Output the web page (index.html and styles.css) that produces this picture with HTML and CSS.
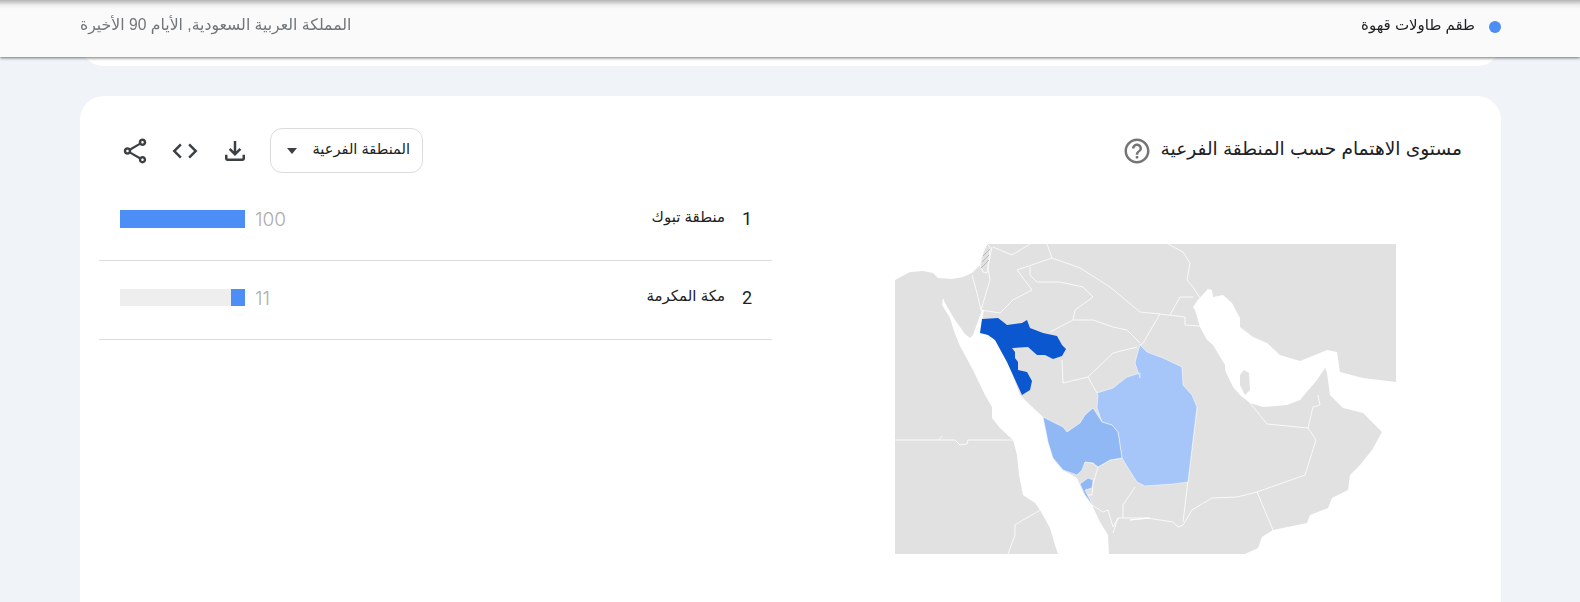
FILE: index.html
```html
<!DOCTYPE html>
<html lang="ar" dir="rtl">
<head>
  <meta charset="UTF-8">
  <title>مستوى الاهتمام حسب المنطقة الفرعية</title>
  <link rel="stylesheet" href="styles.css">
</head>
<body>
  <header class="topbar">
    <div class="term">
      <span class="term-dot"></span>
      <span class="term-name">طقم طاولات قهوة</span>
    </div>
    <div class="scope">المملكة العربية السعودية, الأيام 90 الأخيرة</div>
  </header>

  <div class="prev-card"></div>

  <section class="card">
    <div class="card-head">
      <div class="card-title">
        <h2>مستوى الاهتمام حسب المنطقة الفرعية</h2>
        <svg class="help" viewBox="0 0 24 24"><path d="M11 18h2v-2h-2v2zm1-16C6.48 2 2 6.48 2 12s4.48 10 10 10 10-4.48 10-10S17.52 2 12 2zm0 18c-4.41 0-8-3.59-8-8s3.59-8 8-8 8 3.59 8 8-3.59 8-8 8zm0-14c-2.21 0-4 1.79-4 4h2c0-1.1.9-2 2-2s2 .9 2 2c0 2-3 1.75-3 5h2c0-2.25 3-2.5 3-5 0-2.21-1.79-4-4-4z"/></svg>
      </div>
      <div class="actions">
        <div class="select">
          <span class="select-label">المنطقة الفرعية</span>
          <span class="caret"></span>
        </div>
        <svg class="icon" viewBox="0 0 24 24"><path d="M18 15v3H6v-3H4v3c0 1.1.9 2 2 2h12c1.1 0 2-.9 2-2v-3h-2zm-1-4-1.41-1.41L13 12.17V4h-2v8.17L8.41 9.59 7 11l5 5 5-5z"/></svg>
        <svg class="icon" viewBox="0 0 24 24"><path d="M9.4 16.6 4.8 12l4.6-4.6L8 6l-6 6 6 6 1.4-1.4zm5.2 0 4.6-4.6-4.6-4.6L16 6l6 6-6 6-1.4-1.4z"/></svg>
        <svg class="icon" viewBox="0 0 24 24"><path d="M18 16.08c-.76 0-1.44.3-1.96.77L8.91 12.7c.05-.23.09-.46.09-.7s-.04-.47-.09-.7l7.05-4.11c.54.5 1.25.81 2.04.81 1.66 0 3-1.34 3-3s-1.34-3-3-3-3 1.34-3 3c0 .24.04.47.09.7L8.04 9.81C7.5 9.31 6.79 9 6 9c-1.66 0-3 1.34-3 3s1.34 3 3 3c.79 0 1.5-.31 2.04-.81l7.12 4.16c-.05.21-.08.43-.08.65 0 1.61 1.31 2.92 2.92 2.92 1.61 0 2.92-1.31 2.92-2.92s-1.31-2.92-2.92-2.92zM18 4c.55 0 1 .45 1 1s-.45 1-1 1-1-.45-1-1 .45-1 1-1zM6 13c-.55 0-1-.45-1-1s.45-1 1-1 1 .45 1 1-.45 1-1 1zm12 7.02c-.55 0-1-.45-1-1s.45-1 1-1 1 .45 1 1-.45 1-1 1z"/></svg>
      </div>
    </div>

    <div class="card-body">
      <svg class="map" viewBox="0 0 501 310" dir="ltr">
        <rect class="land" width="501" height="310"/>
        <!-- mediterranean -->
        <path class="sea" d="M0 0V36L15 28 28 27 38 29 43 34 57 35 68 33 77 29 85 21 88 9 92 0Z"/>
        <!-- red sea and the two gulfs -->
        <path class="sea" d="M48 54 47 61 55 74 60 90 65 102 78 126 90 151 97 163 97 174 105 184 118 196 122 211 124 231 128 251 140 259 145 266 155 284 160 301 163 310H214L213 291 205 278 197 261 188 248 182 234 168 226 158 214 153 198 153 188 148 173 133 159 125 151 117 129 112 118 100 96 92 89 85 89 89 66 87 66 78 91 75 94 70 90 60 76 50 59Z"/>
        <!-- gulf and arabian sea -->
        <path class="sea" d="M298 63 303 56 313 45 317 46 318 53 328 51 337 59 345 74 345 83 358 93 372 99 385 111 405 117 415 113 432 106 442 108 445 128 468 134 501 138V310H350L363 304 367 293 378 286 412 279 415 271 433 264 437 254 453 246 455 231 465 221 477 206 487 188 468 169 448 164 435 151 432 129 430 124 422 136 405 156 392 161 368 163 355 159 345 151 338 143 330 126 330 121 318 101 312 96 305 83 300 66Z"/>
        <path class="land" d="M345 131 349 126 354 129 355 146 350 151 345 141Z"/>

        <g class="borders">
          <path d="M77 31 82 49 86 66M97 3 93 23 95 36 86 66"/>
          <path d="M98 3 117 11 135 0M152 0 157 14 122 26 137 46 118 56 105 69 86 66"/>
          <path d="M135 23V31L142 38H165L188 43 198 53 180 66 178 76 155 88"/>
          <path d="M157 14 185 24 215 43 245 68 265 70 290 73 290 81 305 82"/>
          <path d="M265 70 248 99 245 101M275 71 285 53H298"/>
          <path d="M178 76H198L218 83 232 86 245 99"/>
          <path d="M167 116 168 139 193 133 218 109 242 103M193 133 202 149"/>
          <path d="M273 0 288 8 295 19 292 36 298 43 305 54"/>
          <path d="M302 163 288 278"/>
          <path d="M235 276 252 274 278 278 283 283 288 281 297 266 317 254 342 253 362 248 410 231 421 196 413 184 372 180 355 159"/>
          <path d="M362 248 378 286M413 184 418 163 425 161 423 151"/>
          <path d="M0 196H60L65 201 72 200 73 196H118M44 196 47 192"/>
          <path d="M113 310 120 291 120 281 128 276 142 268 145 266"/>
          <path d="M182 231 190 218 198 219 203 223M203 223 198 240 197 251 190 251 197 261 208 268 213 266 218 283 223 274 228 274 228 261 240 243"/>
          <path d="M228 274 255 274 235 276M218 289 223 274"/>
          <path d="M190 218 198 219 203 223 215 216 227 214"/>
        </g>

        <path class="hatch" d="M88 9 92 0 95 3 94 14 92 29 88 28 85 21Z"/>
        <path class="lines" d="M86 24 94 16M87 18 94 11M88 12 95 5"/>

        <path class="level-low" d="M203 151 202 149 218 144 232 133 245 129 245 134 240 119 242 111 245 101 252 108 268 114 287 123 288 141 297 151 302 163 293 238 278 240 250 242 242 238 233 224 227 214 223 188 217 181 207 178 202 164Z"/>
        <path class="level-mid" d="M148 173 158 178 168 183 172 188 185 179 190 171 198 164 207 178 217 181 223 188 227 214 215 216 203 223 198 219 190 218 187 226 182 231 168 226 158 214 153 198Z"/>
        <path class="level-mid" d="M185 240 193 234 198 236 197 244 190 246 195 256 197 261 190 251Z"/>
        <path class="level-top" d="M85 89 87 75 103 74 107 77 112 81 127 79 132 76 135 84 148 89 162 92 167 101 171 105 167 112 158 115 150 111 142 111 133 103 117 104 120 108 120 114 123 118 123 126 132 128 137 137 135 146 127 151 117 129 112 118 100 96 93 91Z"/>
      </svg>

      <div class="regions">
        <div class="region">
          <span class="rank">1</span>
          <span class="region-name">منطقة تبوك</span>
          <span class="value">100</span>
          <div class="bar"><div class="bar-fill" style="width: 100%"></div></div>
        </div>
        <div class="region">
          <span class="rank">2</span>
          <span class="region-name">مكة المكرمة</span>
          <span class="value">11</span>
          <div class="bar"><div class="bar-fill" style="width: 11%"></div></div>
        </div>
      </div>
    </div>
  </section>
</body>
</html>
```

FILE: styles.css
```css
html, body { height: 100%; overflow: hidden; }
body { margin: 0; background: #f0f4f9; color: #202124; font-family: "Liberation Sans", "DejaVu Sans", sans-serif; }

.topbar { position: fixed; top: 0; left: 0; right: 0; height: 57px; box-sizing: border-box; padding: 0 79px 0 80px; display: flex; justify-content: space-between; background: linear-gradient(#b4b4b4, #ececec 5px, #fafafa 9px); box-shadow: 0 1px 3px rgba(0, 0, 0, .55); }
.term { display: flex; align-items: center; gap: 14px; height: 54px; font-size: 15px; }
.term-dot { width: 12px; height: 12px; border-radius: 50%; background: #4c8df6; }
.term-name { margin-top: -5px; color: #202124; }
.scope { height: 50px; line-height: 50px; font-size: 15.7px; color: #70757a; }

.prev-card { height: 66px; margin: 0 79px 0 80px; background: #fff; border-radius: 0 0 24px 24px; }

.card { margin: 30px 79px 0 80px; height: 600px; background: #fff; border-radius: 24px; }
.card-head { display: flex; justify-content: space-between; align-items: center; padding: 32px 39px 0 40px; }
.card-title { display: flex; align-items: center; gap: 9px; }
.card-title h2 { margin: -4px 0 0; font-size: 18.6px; font-weight: 400; }
.help { width: 30px; height: 30px; fill: #757575; }
.actions { display: flex; align-items: center; gap: 20px; }
.icon { width: 30px; height: 30px; fill: #3c4043; }
.select { display: flex; align-items: center; justify-content: space-between; box-sizing: border-box; width: 153px; height: 45px; padding: 0 12px 0 16px; border: 1px solid #dadce0; border-radius: 12px; font-size: 14.6px; }
.select-label { margin-top: -4px; }
.caret { border: 5px solid transparent; border-top: 6px solid #3c4043; border-bottom: 0; }

.card-body { display: grid; grid-template-columns: 501px 673px; gap: 123px; padding: 9px 105px 0 19px; }
.map { display: block; width: 501px; height: 310px; margin-top: 62px; }
.land { fill: #e1e1e1; }
.sea { fill: #fff; }
.borders { fill: none; stroke: #fff; stroke-width: .8; }
.hatch { fill: #e1e1e1; stroke: #fff; stroke-width: .8; }
.lines { fill: none; stroke: #bbb; stroke-width: 1; }
.level-low { fill: #a6c6f9; stroke: #fff; stroke-width: .5; }
.level-mid { fill: #90b8f5; stroke: #fff; stroke-width: .5; }
.level-top { fill: #0b57d0; }

.region { display: flex; align-items: center; height: 18px; padding: 28px 20px 32px 21px; border-bottom: 1px solid #dadce0; }
.rank { width: 27px; margin-top: -2px; font-family: Roboto, sans-serif; font-size: 18px; }
.region-name { margin-top: -4px; font-size: 15px; }
.value { margin-right: auto; margin-left: 10px; font-family: Inter, sans-serif; font-size: 19px; font-weight: 300; color: #adadad; }
.bar { width: 125px; height: 18px; background: #eee; }
.region + .region .bar { height: 17px; margin-bottom: 1px; }
.bar-fill { height: 100%; background: #4c8df6; }
```
